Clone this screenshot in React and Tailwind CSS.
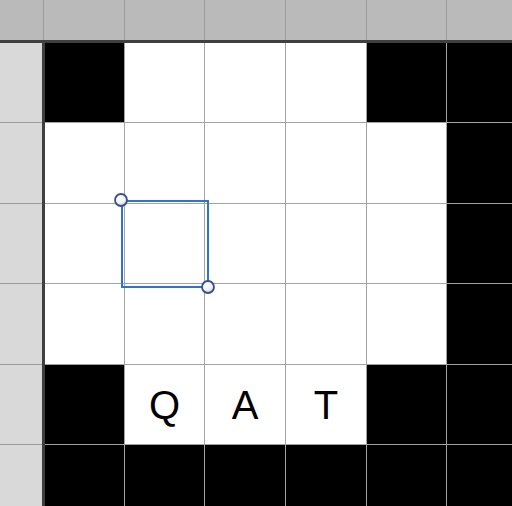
import React from 'react';

// 1 = black cell, 0 = white cell
const cells = [
  [1, 0, 0, 0, 1, 1],
  [0, 0, 0, 0, 0, 1],
  [0, 0, 0, 0, 0, 1],
  [0, 0, 0, 0, 0, 1],
  [1, 'Q', 'A', 'T', 1, 1],
  [1, 1, 1, 1, 1, 1],
];

const Handle = ({ cx, cy }) => (
  <circle cx={cx} cy={cy} r="6" fill="url(#knob)" stroke="#3b4f8a" strokeWidth="1.8" />
);

export default function App() {
  return (
    <div className="relative w-[512px] h-[506px] overflow-hidden bg-white font-['Liberation_Sans',Arial,sans-serif]">
      {/* column header */}
      <div className="grid grid-cols-[43px_80px_79px_80px_80px_79px_1fr] gap-px bg-[#9c9c9c] h-[40px]">
        {Array.from({ length: 7 }).map((_, i) => (
          <div key={i} className="bg-[#b9bab9]" />
        ))}
      </div>
      <div className="h-[3px] bg-[#3f3f3f]" />

      <div className="flex h-[463px]">
        {/* row header */}
        <div className="w-[42px] grid grid-rows-[79px_80px_79px_80px_79px_1fr] gap-px bg-[#9c9c9c]">
          {Array.from({ length: 6 }).map((_, i) => (
            <div key={i} className="bg-[#d9d9d9]" />
          ))}
        </div>
        <div className="w-[3px] bg-[#3f3f3f]" />

        {/* sheet */}
        <div className="flex-1 grid grid-cols-[79px_79px_80px_80px_79px_1fr] grid-rows-[79px_80px_79px_80px_79px_1fr] gap-px bg-[#a3a3a3]">
          {cells.flat().map((c, i) => (
            <div
              key={i}
              className={`flex items-center justify-center text-[40px] leading-none text-black ${c === 1 ? 'bg-black' : 'bg-white'}`}
            >
              {typeof c === 'string' ? c : null}
            </div>
          ))}
        </div>
      </div>

      {/* selection overlay */}
      <svg className="absolute left-0 top-0" width="512" height="506" viewBox="0 0 512 506">
        <defs>
          <radialGradient id="knob" cx="40%" cy="35%" r="70%">
            <stop offset="0%" stopColor="#ffffff" />
            <stop offset="60%" stopColor="#f0f0f0" />
            <stop offset="100%" stopColor="#c4c4c4" />
          </radialGradient>
        </defs>
        <rect x="122" y="201" width="86" height="86" fill="none" stroke="#2f73cc" strokeWidth="2" />
        <Handle cx={121} cy={200} />
        <Handle cx={208} cy={287} />
      </svg>
    </div>
  );
}
